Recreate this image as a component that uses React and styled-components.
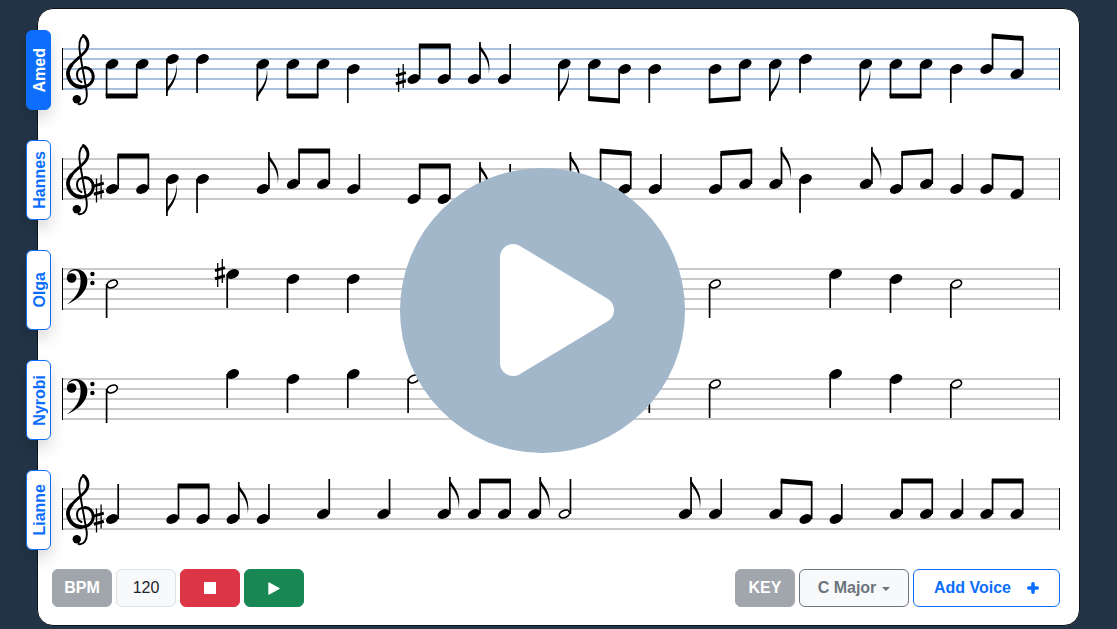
import React from "react";
import styled, { createGlobalStyle } from "styled-components";

const GlobalStyle = createGlobalStyle`
  html, body {
    margin: 0;
    padding: 0;
    background: #223446;
    font-family: "Liberation Sans", Arial, sans-serif;
  }
`;

// slot = eighth-note column on the stave, y = px below the top staff line
const q = (s, y, dir, sharp) => ({ kind: "q", s, y, dir, sharp });
const e = (s, y, dir) => ({ kind: "e", s, y, dir });
const h = (s, y, dir) => ({ kind: "h", s, y, dir });
const b = (a, ay, c, cy, dir, sharp) => ({ kind: "b", a, ay, c, cy, dir, sharp });

const voices = [
  {
    name: "Amed",
    active: true,
    clef: "treble",
    notes: [
      b(0, 15, 1, 15, "d"), e(2, 10, "d"), q(3, 10, "d"), e(5, 15, "d"), b(6, 15, 7, 15, "d"), q(8, 20, "d"),
      b(10, 30, 11, 30, "u", true), e(12, 30, "u"), q(13, 30, "u"), e(15, 15, "d"), b(16, 15, 17, 20, "d"), q(18, 20, "d"),
      b(20, 20, 21, 15, "d"), e(22, 15, "d"), q(23, 10, "d"), e(25, 15, "d"), b(26, 15, 27, 15, "d"), q(28, 20, "d"),
      b(29, 20, 30, 25, "u"),
    ],
  },
  {
    name: "Hannes",
    clef: "treble",
    keySharp: true,
    notes: [
      b(0, 30, 1, 30, "u"), e(2, 20, "d"), q(3, 20, "d"), e(5, 30, "u"), b(6, 25, 7, 25, "u"), q(8, 30, "u"),
      b(10, 40, 11, 40, "u"), e(12, 40, "u"), q(13, 40, "u"), e(15, 30, "u"), b(16, 25, 17, 30, "u"), q(18, 30, "u"),
      b(20, 30, 21, 25, "u"), e(22, 25, "u"), q(23, 20, "d"), e(25, 25, "u"), b(26, 30, 27, 25, "u"), q(28, 30, "u"),
      b(29, 30, 30, 35, "u"),
    ],
  },
  {
    name: "Olga",
    clef: "bass",
    notes: [
      h(0, 15, "d"), q(4, 5, "d", true), q(6, 10, "d"), q(8, 10, "d"), h(10, 15, "d"), q(14, 5, "d"), q(16, 10, "d"), q(18, 10, "d"),
      h(20, 15, "d"), q(24, 5, "d"), q(26, 10, "d"), h(28, 15, "d"),
    ],
  },
  {
    name: "Nyrobi",
    clef: "bass",
    notes: [
      h(0, 10, "d"), q(4, -5, "d"), q(6, 0, "d"), q(8, -5, "d"), h(10, 0, "d"), q(14, -5, "d"), q(16, 0, "d"), q(18, 0, "d"),
      h(20, 5, "d"), q(24, -5, "d"), q(26, 0, "d"), h(28, 5, "d"),
    ],
  },
  {
    name: "Lianne",
    clef: "treble",
    keySharp: true,
    notes: [
      q(0, 30, "u"), b(2, 30, 3, 30, "u"), e(4, 30, "u"), q(5, 30, "u"), q(7, 25, "u"), q(9, 25, "u"),
      e(11, 25, "u"), b(12, 25, 13, 25, "u"), e(14, 25, "u"), h(15, 25, "u"),
      e(19, 25, "u"), q(20, 25, "u"), b(22, 25, 23, 30, "u"), q(24, 30, "u"), b(26, 25, 27, 25, "u"), q(28, 25, "u"),
      b(29, 25, 30, 25, "u"),
    ],
  },
];

const slotX = (s) => 50.2 + s * 30.15;
const stemX = (x, dir) => (dir === "u" ? x + 6 : x - 5.6);

const Page = styled.div`
  height: 629px;
  box-sizing: border-box;
  padding: 8px 37px 3px 37px;
  overflow: hidden;
`;

const Card = styled.main`
  position: relative;
  box-sizing: border-box;
  height: 618px;
  padding: 21px 19px 0 14px;
  background: #fff;
  border: 1px solid #0d141c;
  border-radius: 16px;
  display: flex;
  flex-direction: column;
`;

const Voices = styled.div`
  display: flex;
  flex-direction: column;
  gap: 30px;
  margin-left: -26px;
`;

const VoiceRow = styled.div`
  display: flex;
  align-items: flex-start;
  gap: 11px;
  height: 80px;
`;

const VoiceTab = styled.button`
  box-sizing: border-box;
  flex: none;
  width: 25px;
  height: 80px;
  padding: 0 0 0 2px;
  display: flex;
  align-items: center;
  justify-content: center;
  background: ${(p) => (p.$active ? "#0d6efd" : "#fff")};
  color: ${(p) => (p.$active ? "#fff" : "#0d6efd")};
  border: 1px solid #0d6efd;
  border-radius: 6px;
  box-shadow: 0 8px 16px rgba(0, 0, 0, 0.15);
  font: bold 16px "Liberation Sans", Arial, sans-serif;
`;

const TabLabel = styled.span`
  writing-mode: vertical-rl;
  transform: rotate(180deg);
`;

const Stave = styled.svg`
  flex: none;
  display: block;
  width: 998px;
  height: 80px;
  overflow: visible;
`;

const Toolbar = styled.div`
  display: flex;
  justify-content: space-between;
  margin-top: 19px;
`;

const Group = styled.div`
  display: flex;
  gap: 4px;
`;

const Tool = styled.button`
  box-sizing: border-box;
  width: ${(p) => p.$w || 60}px;
  height: 38px;
  padding: 0;
  display: flex;
  align-items: center;
  justify-content: center;
  gap: ${(p) => p.$gap || 0}px;
  border-radius: 6px;
  font: ${(p) => (p.$plain ? "normal" : "bold")} 16px "Liberation Sans", Arial, sans-serif;
  background: ${(p) => p.$bg};
  color: ${(p) => p.$fg};
  border: 1px solid ${(p) => p.$line};
`;

const Caret = styled.i`
  width: 0;
  height: 0;
  margin-top: 1px;
  border-top: 4.5px solid #6c757d;
  border-left: 4.5px solid transparent;
  border-right: 4.5px solid transparent;
`;

const PlayOverlay = styled.div`
  position: absolute;
  left: 362px;
  top: 159px;
  width: 285px;
  height: 285px;
  box-sizing: border-box;
  padding: 0 0 1px 28px;
  border-radius: 50%;
  background: #a3b7cb;
  display: flex;
  align-items: center;
  justify-content: center;
`;

const StopSquare = styled.span`
  width: 12px;
  height: 12px;
  background: #fff;
`;

function Sharp({ x, y }) {
  return (
    <g stroke="#000" fill="none">
      <path d={`M${x - 2.3} ${y - 10}V${y + 14}M${x + 2.3} ${y - 14}V${y + 10}`} strokeWidth="1.3" />
      <path d={`M${x - 5} ${y - 2.4}L${x + 5} ${y - 5.4}M${x - 5} ${y + 5.8}L${x + 5} ${y + 2.8}`} strokeWidth="3" />
    </g>
  );
}

function Head({ x, y, open }) {
  if (open) {
    return (
      <ellipse cx={x} cy={y} rx="5.4" ry="3.5" fill="#fff" stroke="#000" strokeWidth="1.7" transform={`rotate(-24 ${x} ${y})`} />
    );
  }
  return <ellipse cx={x} cy={y} rx="6.5" ry="4.5" fill="#000" transform={`rotate(-24 ${x} ${y})`} />;
}

function Stem({ x, y1, y2 }) {
  return <line x1={x} x2={x} y1={y1} y2={y2} stroke="#000" strokeWidth="1.7" />;
}

function Flag({ sx, y, dir }) {
  const d =
    dir === "u"
      ? `M${sx - 0.8} ${y - 37}C${sx + 0.5} ${y - 29} ${sx + 12.5} ${y - 24} ${sx + 8.8} ${y - 5}C${sx + 9.6} ${y - 16} ${sx + 5} ${y - 23} ${sx - 0.8} ${y - 30}Z`
      : `M${sx - 0.8} ${y + 37}C${sx + 1} ${y + 29} ${sx + 12.5} ${y + 22} ${sx + 9.5} ${y + 5}C${sx + 10} ${y + 16} ${sx + 5} ${y + 23} ${sx - 0.8} ${y + 30}Z`;
  return <path d={d} fill="#000" />;
}

function Note({ n }) {
  const x = slotX(n.s);
  const sx = stemX(x, n.dir);
  const len = n.kind === "e" ? 37 : n.dir === "u" ? 35 : 34;
  return (
    <g>
      {n.sharp && <Sharp x={x - 12.8} y={n.y - 1} />}
      <Stem x={sx} y1={n.y} y2={n.dir === "u" ? n.y - len : n.y + len} />
      {n.kind === "e" && <Flag sx={sx} y={n.y} dir={n.dir} />}
      <Head x={x} y={n.y} open={n.kind === "h"} />
    </g>
  );
}

function Beamed({ n }) {
  const x1 = slotX(n.a);
  const x2 = slotX(n.c);
  const s1 = stemX(x1, n.dir) - 0.85;
  const s2 = stemX(x2, n.dir) + 0.85;
  const up = n.dir === "u";
  const off = up ? -33 : 32;
  // the note furthest along the stem direction anchors the beam, slope is clamped
  const anchorFirst = up ? n.ay <= n.cy : n.ay >= n.cy;
  const slope = Math.max(-2.5, Math.min(2.5, n.cy - n.ay));
  const by1 = anchorFirst ? n.ay + off : n.cy + off - slope;
  const by2 = anchorFirst ? n.ay + off + slope : n.cy + off;
  return (
    <g>
      {n.sharp && <Sharp x={x1 - 12.8} y={n.ay - 1} />}
      <Stem x={stemX(x1, n.dir)} y1={n.ay} y2={by1} />
      <Stem x={stemX(x2, n.dir)} y1={n.cy} y2={by2} />
      <polygon points={`${s1},${by1 - 2.4} ${s2},${by2 - 2.4} ${s2},${by2 + 2.4} ${s1},${by1 + 2.4}`} fill="#000" />
      <Head x={x1} y={n.ay} />
      <Head x={x2} y={n.cy} />
    </g>
  );
}

function TrebleClef() {
  return (
    <g fill="none" stroke="#000" strokeLinecap="round">
      <path d="M21.3 -13.5C17 -10 16.6 -2 18.2 6L24.6 42C26 52 21 56 16.5 55" strokeWidth="1.9" />
      <path d="M21.3 -13.5C26.5 -10 27.5 -3 23.6 2C20 7 13 11 9.5 16" strokeWidth="2.8" />
      <path d="M9.5 16C7 19 5.6 22 6 25.5C6.8 33 13 38 19 38" strokeWidth="3.8" />
      <path d="M19 38C27 38 31.2 33 31.2 28C31.2 22 27 18.4 23 18.4" strokeWidth="3" />
      <path d="M23 18.4C18 18.4 15 21.4 15 25C15 29 17 32 19.4 33" strokeWidth="2" />
      <circle cx="14.8" cy="50.3" r="4.2" fill="#000" stroke="none" />
    </g>
  );
}

function BassClef() {
  return (
    <g fill="#000">
      <circle cx="9.6" cy="9" r="4.8" />
      <path d="M5 7C6 2.5 9.5 0 13.5 0C20.5 0 25.4 5 25.4 12C25.4 23 15 31 4.7 35.6C12 30.5 18.6 23 18.6 12C18.6 5 16.5 1.4 12.6 1.4C9.2 1.4 6.5 3.5 5 7Z" />
      <circle cx="30.4" cy="5" r="2.2" />
      <circle cx="30.4" cy="14" r="2.2" />
    </g>
  );
}

function Staff({ voice }) {
  const lineColor = voice.active ? "#a8c0de" : "#c9c9c9";
  return (
    <Stave viewBox="0 -19 998 80">
      {[0, 10, 20, 30, 40].map((y) => (
        <line key={y} x1="0" x2="998" y1={y} y2={y} stroke={lineColor} strokeWidth="2" />
      ))}
      <path d="M0.5 -1V41M997.5 -1V41" stroke="#000" strokeWidth="1" />
      {voice.clef === "treble" ? <TrebleClef /> : <BassClef />}
      {voice.keySharp && <Sharp x={36.8} y={29.5} />}
      {voice.notes.map((n, i) =>
        n.kind === "b" ? <Beamed key={i} n={n} /> : <Note key={i} n={n} />
      )}
    </Stave>
  );
}

export default function App() {
  return (
    <Page>
      <GlobalStyle />
      <Card>
        <Voices>
          {voices.map((v) => (
            <VoiceRow key={v.name}>
              <VoiceTab $active={v.active}>
                <TabLabel>{v.name}</TabLabel>
              </VoiceTab>
              <Staff voice={v} />
            </VoiceRow>
          ))}
        </Voices>
        <Toolbar>
          <Group>
            <Tool $bg="#a1a6ac" $fg="#fff" $line="#a1a6ac">BPM</Tool>
            <Tool $plain $bg="#f8f9fa" $fg="#212529" $line="#dee2e6">120</Tool>
            <Tool $bg="#dc3545" $fg="#fff" $line="#dc3545" aria-label="Stop">
              <StopSquare />
            </Tool>
            <Tool $bg="#198754" $fg="#fff" $line="#198754" aria-label="Play">
              <svg width="12" height="13" viewBox="0 0 12 13">
                <path d="M1 1L11 6.5L1 12Z" fill="#fff" stroke="#fff" strokeWidth="1.4" strokeLinejoin="round" />
              </svg>
            </Tool>
          </Group>
          <Group>
            <Tool $bg="#a1a6ac" $fg="#fff" $line="#a1a6ac">KEY</Tool>
            <Tool $w={110} $gap={6} $bg="#f8f9fa" $fg="#6c757d" $line="#6c757d">
              C Major <Caret />
            </Tool>
            <Tool $w={147} $gap={16} $bg="#fff" $fg="#0d6efd" $line="#0d6efd">
              Add Voice
              <svg width="12" height="12" viewBox="0 0 12 12">
                <path d="M6 1.8V10.2M1.8 6H10.2" stroke="#0d6efd" strokeWidth="3.6" strokeLinecap="round" />
              </svg>
            </Tool>
          </Group>
        </Toolbar>
        <PlayOverlay>
          <svg width="116" height="134" viewBox="0 0 116 134">
            <path d="M14 14V120L102 67Z" fill="#fff" stroke="#fff" strokeWidth="26" strokeLinejoin="round" />
          </svg>
        </PlayOverlay>
      </Card>
    </Page>
  );
}
